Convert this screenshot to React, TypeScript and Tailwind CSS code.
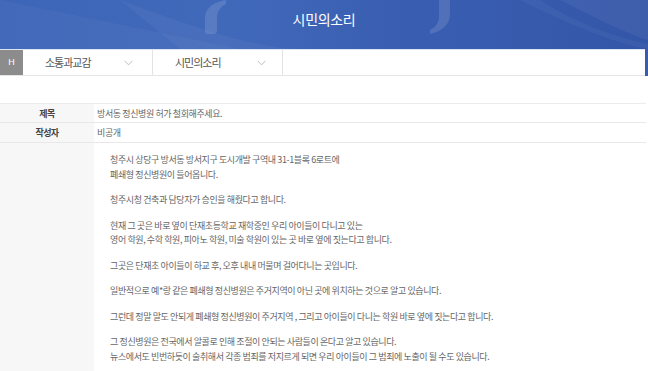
import React from "react";

const KR = { fontFamily: '"Noto Sans CJK KR", "Noto Sans", sans-serif' };

function Chevron() {
  return (
    <svg width="9" height="6" viewBox="0 0 9 6" className="shrink-0">
      <path d="M0.5 0.8 L4.5 4.8 L8.5 0.8" fill="none" stroke="#b5b5b5" strokeWidth="0.9" />
    </svg>
  );
}

const paragraphs: string[][] = [
  ["청주시 상당구 방서동 방서지구 도시개발 구역내 31-1블록 6로트에", "폐쇄형 정신병원이 들어옵니다."],
  ["청주시청 건축과 담당자가 승인을 해줬다고 합니다."],
  [
    "현재 그 곳은 바로 옆이 단재초등학교 재학중인 우리 아이들이 다니고 있는",
    "영어 학원, 수학 학원, 피아노 학원, 미술 학원이 있는 곳 바로 옆에 짓는다고 합니다.",
  ],
  ["그곳은 단재초 아이들이 하교 후, 오후 내내 머물며 걸어다니는 곳입니다."],
  ["일반적으로 예*랑 같은 폐쇄형 정신병원은 주거지역이 아닌 곳에 위치하는 것으로 알고 있습니다."],
  ["그런데 정말 말도 안되게 폐쇄형 정신병원이 주거지역 , 그리고 아이들이 다니는 학원 바로 옆에 짓는다고 합니다."],
  [
    "그 정신병원은 전국에서 알콜로 인해 조절이 안되는 사람들이 온다고 알고 있습니다.",
    "뉴스에서도 빈번하듯이 술취해서 각종 범죄를 저지르게 되면 우리 아이들이 그 범죄에 노출이 될 수도 있습니다.",
  ],
];

export default function App() {
  return (
    <div className="w-[648px] h-[371px] overflow-hidden bg-white" style={KR}>
      {/* Banner */}
      <div className="relative h-[49px] bg-[#3a60b3] overflow-hidden">
        <svg className="absolute inset-0" width="648" height="49" viewBox="0 0 648 49">
          <defs>
            <linearGradient id="g1" x1="0" y1="0" x2="1" y2="0">
              <stop offset="0" stopColor="#3d66b8" />
              <stop offset="0.35" stopColor="#4169ba" />
              <stop offset="0.6" stopColor="#3a5fb2" />
              <stop offset="1" stopColor="#3456a8" />
            </linearGradient>
          </defs>
          <rect width="648" height="49" fill="url(#g1)" />
          <path d="M0 0 L240 49 L0 49 Z" fill="#ffffff" opacity="0.03" />
          <path d="M120 0 C200 30 260 49 300 49 L180 49 Z" fill="#ffffff" opacity="0.04" />
          <path d="M560 0 C600 20 630 35 648 40 L648 0 Z" fill="#ffffff" opacity="0.05" />
          <path d="M520 0 C580 30 620 44 648 49 L648 44 C610 36 570 20 540 0 Z" fill="#ffffff" opacity="0.04" />
          {/* left quote */}
          <path
            d="M226 0 L226 4 C220 7 217 12 217 18 L217 31 C217 33 215 34 213 34 L208 34 C206 34 205 33 205 31 L205 18 C205 9 212 2 226 0 Z"
            fill="#ffffff"
            opacity="0.12"
          />
          {/* right quote */}
          <path
            d="M439 0 L450 0 L450 14 C450 24 443 31 430 34 L430 30 C436 27 439 22 439 16 Z"
            fill="#ffffff"
            opacity="0.12"
          />
        </svg>
        <div className="relative flex h-full items-start justify-center pt-[9px]">
          <span className="text-[14px] leading-[20px] tracking-[-0.3px] text-white">시민의소리</span>
        </div>
      </div>

      {/* Nav */}
      <div className="flex h-[27px] bg-[#3a5cae]">
        <div className="flex w-[645px] border-t border-[#dde4f2] border-b border-b-[#e6e6e6] bg-white">
          <div className="flex w-[23px] items-center justify-center bg-[#8c8c8c] text-[9px] text-white" style={{ fontFamily: '"Liberation Sans", sans-serif' }}>
            H
          </div>
          <div className="flex w-[130px] items-center border-r border-[#e3e3e3] pl-[22px] pr-[19px]">
            <span className="flex-1 text-[11px] tracking-[-1px] text-[#555]">소통과교감</span>
            <Chevron />
          </div>
          <div className="flex w-[130px] items-center border-r border-[#e3e3e3] pl-[22px] pr-[16px]">
            <span className="flex-1 text-[11px] tracking-[-1px] text-[#555]">시민의소리</span>
            <Chevron />
          </div>
          <div className="flex-1" />
        </div>
        <div className="flex-1" />
      </div>

      {/* Table */}
      <div className="mt-[27px] w-[646px] border-t border-[#ececec]">
        <div className="flex h-[19px] border-b border-[#e8e8e8]">
          <div className="flex w-[94px] items-center justify-center bg-[#f7f7f7] pt-[1px] text-[9px] font-bold tracking-[-0.6px] text-[#444]">
            제목
          </div>
          <div className="flex items-center pl-[3px] pt-[1px] text-[9px] tracking-[-0.4px] text-[#666]">
            방서동 정신병원 허가 철회해주세요.
          </div>
        </div>
        <div className="flex h-[20px] border-b border-[#e8e8e8]">
          <div className="flex w-[94px] items-center justify-center bg-[#f7f7f7] text-[9px] font-bold tracking-[-0.6px] text-[#444]">
            작성자
          </div>
          <div className="flex items-center pl-[3px] text-[9px] tracking-[-0.4px] text-[#666]">
            비공개
          </div>
        </div>
        <div className="flex h-[240px]">
          <div className="w-[94px] bg-[#f7f7f7]" />
          <div className="flex flex-col gap-[11px] pl-[16px] pt-[10px] text-[9px] leading-[14.5px] tracking-[-0.4px] text-[#666]">
            {paragraphs.map((p, i) => (
              <div key={i}>
                {p.map((l, j) => (
                  <div key={j} className="whitespace-nowrap">
                    {l}
                  </div>
                ))}
              </div>
            ))}
          </div>
        </div>
      </div>
    </div>
  );
}
